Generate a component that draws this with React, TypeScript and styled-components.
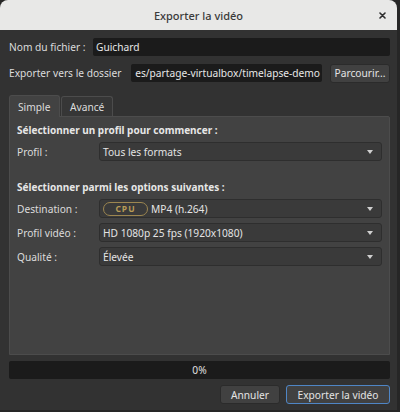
import React from "react";
import styled, { createGlobalStyle } from "styled-components";

const GlobalStyle = createGlobalStyle`
  html, body {
    margin: 0;
    padding: 0;
    background: #262626;
  }
  body {
    font-family: "Noto Sans", "DejaVu Sans", sans-serif;
    font-size: 10.2px;
    color: #dcdcdc;
  }
`;

const Window = styled.div`
  width: 397px;
  height: 410px;
  display: flex;
  flex-direction: column;
  background: #323232;
  border-radius: 8px 8px 0 0;
  overflow: hidden;
`;

const TitleBar = styled.div`
  height: 30px;
  flex: none;
  position: relative;
  display: flex;
  align-items: center;
  justify-content: center;
  background: #e8e8e7;
  color: #3a3a3a;
  font-size: 11px;
  font-weight: 500;
`;

const CloseButton = styled.span`
  position: absolute;
  right: 8px;
  top: 8px;
  width: 14px;
  height: 14px;
  display: flex;
  align-items: center;
  justify-content: center;
`;

const Body = styled.div`
  flex: 1;
  display: flex;
  flex-direction: column;
  padding: 8px 7px 8px 9px;
`;

const FieldRow = styled.div`
  display: flex;
  align-items: center;
  height: 18px;
  margin-bottom: 8px;
`;

const Label = styled.span<{ $width: number }>`
  width: ${(p) => p.$width}px;
  flex: none;
  white-space: nowrap;
`;

const TextInput = styled.div`
  flex: 1;
  height: 18px;
  box-sizing: border-box;
  padding: 0 3px;
  display: flex;
  align-items: center;
  background: #1b1b1b;
  border-radius: 2px;
  white-space: nowrap;
  overflow: hidden;
  color: #e8e8e8;
`;

const PathInput = styled(TextInput)`
  flex: none;
  width: 191px;
  padding: 0 2px;
  justify-content: flex-end;
`;

const Button = styled.button<{ $primary?: boolean; $width: number }>`
  width: ${(p) => p.$width}px;
  height: 19px;
  box-sizing: border-box;
  padding: 0;
  font-family: inherit;
  font-size: 10.2px;
  color: #e4e4e4;
  background: #414141;
  border: 1px solid ${(p) => (p.$primary ? "#4f86c6" : "#2b2b2b")};
  border-radius: 3px;
  white-space: nowrap;
`;

const BrowseButton = styled(Button)`
  margin-left: 8px;
`;

const Tabs = styled.div`
  display: flex;
  align-items: flex-end;
  margin-top: 5px;
  height: 21px;
`;

const Tab = styled.div<{ $active?: boolean }>`
  box-sizing: border-box;
  height: ${(p) => (p.$active ? 22 : 20)}px;
  width: ${(p) => (p.$active ? 51 : 52)}px;
  margin-right: 1px;
  padding-left: 8px;
  display: flex;
  align-items: center;
  background: ${(p) => (p.$active ? "#424242" : "#363636")};
  border: 1px solid #4c4c4c;
  border-bottom: none;
  border-radius: 3px 3px 0 0;
  margin-bottom: ${(p) => (p.$active ? -1 : 0)}px;
  position: relative;
  z-index: ${(p) => (p.$active ? 1 : 0)};
`;

const Panel = styled.div`
  height: 239px;
  box-sizing: border-box;
  padding: 5px 7px 0 7px;
  background: #424242;
  border: 1px solid #4c4c4c;
  border-top-right-radius: 2px;
  display: flex;
  flex-direction: column;
`;

const Heading = styled.div<{ $top: number }>`
  font-weight: 700;
  font-size: 10px;
  color: #e6e6e6;
  margin-top: ${(p) => p.$top}px;
  margin-bottom: 4px;
  height: 16px;
  display: flex;
  align-items: center;
`;

const ComboRow = styled.div`
  display: flex;
  align-items: center;
  height: 19px;
  margin-bottom: 5px;
`;

const Combo = styled.div`
  flex: 1;
  height: 19px;
  box-sizing: border-box;
  padding: 0 8px 0 3px;
  display: flex;
  align-items: center;
  gap: 3px;
  background: #3a3a3a;
  border: 1px solid #2e2e2e;
  border-radius: 3px;
  color: #e4e4e4;
  white-space: nowrap;
`;

const ComboText = styled.span`
  flex: 1;
`;

const Arrow = styled.span`
  width: 0;
  height: 0;
  border-left: 3.5px solid transparent;
  border-right: 3.5px solid transparent;
  border-top: 4px solid #d0d0d0;
`;

const CpuBadge = styled.span`
  width: 45px;
  height: 14px;
  box-sizing: border-box;
  display: flex;
  align-items: center;
  justify-content: center;
  border: 1.5px solid #9c8650;
  border-radius: 8px;
  color: #b89a56;
  font-size: 8.5px;
  font-weight: 700;
  letter-spacing: 1px;
`;

const Progress = styled.div`
  margin-top: 6px;
  height: 18px;
  display: flex;
  align-items: center;
  justify-content: center;
  background: #1b1b1b;
  border-radius: 2px;
  color: #e0e0e0;
`;

const Actions = styled.div`
  margin-top: 6px;
  display: flex;
  justify-content: flex-end;
  gap: 6px;
`;

type Option = { label: string; value: string; badge?: string };

const options: Option[] = [
  { label: "Destination :", value: "MP4 (h.264)", badge: "CPU" },
  { label: "Profil vidéo :", value: "HD 1080p 25 fps (1920x1080)" },
  { label: "Qualité :", value: "Élevée" },
];

const ComboField = ({ label, value, badge }: Option) => (
  <ComboRow>
    <Label $width={82}>{label}</Label>
    <Combo>
      {badge && <CpuBadge>{badge}</CpuBadge>}
      <ComboText>{value}</ComboText>
      <Arrow />
    </Combo>
  </ComboRow>
);

const App = () => {
  return (
    <>
      <GlobalStyle />
      <Window>
        <TitleBar>
          Exporter la vidéo
          <CloseButton>
            <svg width="7" height="7" viewBox="0 0 7 7">
              <path d="M1 1L6 6M6 1L1 6" stroke="#2e2e2e" strokeWidth="1.6" strokeLinecap="round" />
            </svg>
          </CloseButton>
        </TitleBar>
        <Body>
          <FieldRow>
            <Label $width={84}>Nom du fichier :</Label>
            <TextInput>Guichard</TextInput>
          </FieldRow>
          <FieldRow>
            <Label $width={122}>Exporter vers le dossier</Label>
            <PathInput>es/partage-virtualbox/timelapse-demo</PathInput>
            <BrowseButton $width={60}>Parcourir...</BrowseButton>
          </FieldRow>
          <Tabs>
            <Tab $active>Simple</Tab>
            <Tab>Avancé</Tab>
          </Tabs>
          <Panel>
            <Heading $top={0}>Sélectionner un profil pour commencer :</Heading>
            <ComboField label="Profil :" value="Tous les formats" />
            <Heading $top={13}>Sélectionner parmi les options suivantes :</Heading>
            {options.map((o) => (
              <ComboField key={o.label} {...o} />
            ))}
          </Panel>
          <Progress>0%</Progress>
          <Actions>
            <Button $width={60}>Annuler</Button>
            <Button $primary $width={104}>
              Exporter la vidéo
            </Button>
          </Actions>
        </Body>
      </Window>
    </>
  );
};

export default App;
